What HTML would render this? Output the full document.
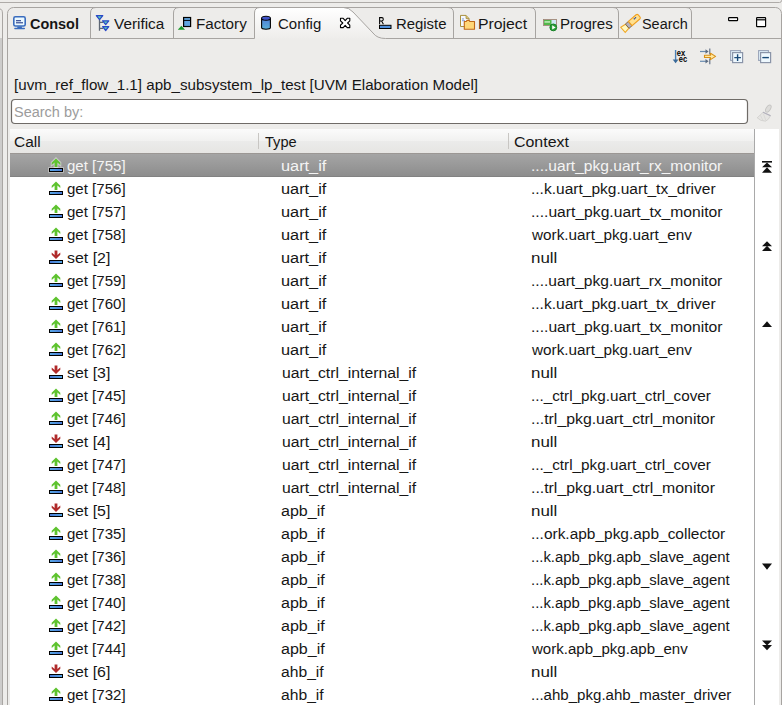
<!DOCTYPE html>
<html><head><meta charset="utf-8">
<style>
html,body{margin:0;padding:0;}
body{width:782px;height:705px;position:relative;overflow:hidden;background:#edecea;font-family:"Liberation Sans",sans-serif;}
.t{position:absolute;font-size:14px;line-height:16px;color:#161616;white-space:pre;transform-origin:0 0;}
.b{font-weight:bold;}
.sel{color:#f4f4f4;}
.ph{color:#9c9c9c;}
.ic{position:absolute;overflow:visible;}
.abs{position:absolute;}
</style></head><body>
<svg width="0" height="0" style="position:absolute">
 <defs>
  <linearGradient id="gbar" x1="0" x2="1" y1="0" y2="0"><stop offset="0" stop-color="#58a8e6"/><stop offset="1" stop-color="#4778d6"/></linearGradient>
  <linearGradient id="gbar2" x1="0" x2="1" y1="0" y2="0"><stop offset="0" stop-color="#4778d6"/><stop offset="1" stop-color="#58a8e6"/></linearGradient>
  <g id="up">
   <rect x="5.5" y="15.5" width="13" height="3" fill="url(#gbar)" stroke="#000" stroke-width="1"/>
   <path d="M12 5.4 L16.3 9.7 L16.3 12 L13.4 9.4 L13.4 13.9 L10.6 13.9 L10.6 9.4 L7.7 12 L7.7 9.7 Z" fill="#5ec32f"/>
  </g>
  <g id="uph">
   <path d="M12 5.4 L16.3 9.7 L16.3 12 L13.4 9.4 L13.4 13.9 L10.6 13.9 L10.6 9.4 L7.7 12 L7.7 9.7 Z" fill="none" stroke="#fff" stroke-opacity="0.45" stroke-width="2"/>
   <rect x="5.5" y="15.5" width="13" height="3" fill="none" stroke="#fff" stroke-opacity="0.45" stroke-width="2.6"/>
   <use href="#up"/>
  </g>
  <g id="dn">
   <rect x="5.5" y="15.5" width="13" height="3" fill="url(#gbar2)" stroke="#000" stroke-width="1"/>
   <path d="M12 14 L16.3 9.7 L16.3 7.4 L13.4 10 L13.4 5.6 L10.6 5.6 L10.6 10 L7.7 7.4 L7.7 9.7 Z" fill="#b02a2a"/>
  </g>
  <linearGradient id="gsel" x1="0" x2="0" y1="0" y2="1"><stop offset="0" stop-color="#a6a6a6"/><stop offset="1" stop-color="#8c8c8c"/></linearGradient>
  <linearGradient id="ghdr" x1="0" x2="0" y1="0" y2="1"><stop offset="0" stop-color="#fbfbfb"/><stop offset="0.5" stop-color="#f1f1f0"/><stop offset="0.52" stop-color="#ebebea"/><stop offset="1" stop-color="#e6e5e3"/></linearGradient>
  <linearGradient id="gtab" x1="0" x2="0" y1="0" y2="1"><stop offset="0" stop-color="#ffffff"/><stop offset="1" stop-color="#eeedeb"/></linearGradient>
 </defs>
</svg>

<!-- chrome -->
<svg class="abs" style="left:0;top:0" width="782" height="705">
 <rect x="0" y="38" width="2" height="667" fill="#cdcccb"/>
 <path d="M0 2.5 L779.5 2.5 Q781.5 2.5 781.5 0.5 L781.5 0" fill="none" stroke="#aeaba8"/>
 <path d="M0 9 Q2.5 9 2.5 14 L2.5 705" fill="none" stroke="#a9a6a3"/>
 <!-- selected tab fill -->
 <path d="M254.5 38.5 L254.5 13 Q254.5 7.5 260 7.5 L343.5 7.5 Q349 7.5 353 12 L373 33 Q377 38.5 385.5 38.5 Z" fill="url(#gtab)"/>
 <!-- frame -->
 <path d="M7.5 705 L7.5 13.5 A6 6 0 0 1 13.5 7.5 L775.5 7.5 A6 6 0 0 1 781.5 13.5 L781.5 705" fill="none" stroke="#a7a4a1"/>
 <path d="M7.5 38.5 L254.5 38.5 M385.5 38.5 L781.5 38.5" fill="none" stroke="#a7a4a1"/>
 <path d="M254.5 38.5 L254.5 13 Q254.5 7.5 260 7.5 L343.5 7.5 Q349 7.5 353 12 L373 33 Q377 38.5 385.5 38.5" fill="none" stroke="#a7a4a1"/>
 <!-- tab separators left of selected: rounded top-left -->
 <path d="M90.5 38.5 L90.5 13 Q90.5 7.5 96 7.5" fill="none" stroke="#a7a4a1"/>
 <path d="M173.5 38.5 L173.5 13 Q173.5 7.5 179 7.5" fill="none" stroke="#a7a4a1"/>
 <!-- right of selected: rounded top-right -->
 <path d="M453.5 38.5 L453.5 13 Q453.5 7.5 448 7.5" fill="none" stroke="#a7a4a1"/>
 <path d="M535.5 38.5 L535.5 13 Q535.5 7.5 530 7.5" fill="none" stroke="#a7a4a1"/>
 <path d="M618.5 38.5 L618.5 13 Q618.5 7.5 613 7.5" fill="none" stroke="#a7a4a1"/>
 <path d="M691.5 38.5 L691.5 13 Q691.5 7.5 686 7.5" fill="none" stroke="#a7a4a1"/>
 <!-- min / max -->
 <rect x="728.6" y="17.6" width="9" height="3" rx="0.6" fill="#fff" stroke="#000" stroke-width="1.15"/>
 <rect x="756.6" y="17.6" width="9" height="9" rx="0.6" fill="#fff" stroke="#000" stroke-width="1.15"/>
 <line x1="756.5" y1="19.8" x2="765.5" y2="19.8" stroke="#000" stroke-width="1.2"/>

 <!-- search box -->
 <rect x="11.5" y="99.5" width="736" height="24" rx="3.5" fill="#fff" stroke="#6f6b67" stroke-width="1.2"/>

 <!-- table -->
 <rect x="10" y="129" width="745" height="576" fill="#fff"/>
 <rect x="10" y="129" width="744" height="24" fill="url(#ghdr)"/>
 <line x1="258.5" y1="133" x2="258.5" y2="149" stroke="#c8c6c3"/>
 <line x1="508.5" y1="133" x2="508.5" y2="149" stroke="#c8c6c3"/>
 <rect x="10" y="153" width="744" height="24" fill="url(#gsel)"/>
 <line x1="10" y1="153.5" x2="754" y2="153.5" stroke="#9b9794"/>
 <line x1="10" y1="176.5" x2="754" y2="176.5" stroke="#828282"/>
 <line x1="754.5" y1="129" x2="754.5" y2="705" stroke="#a9a9a9"/>
 <rect x="755" y="129" width="24" height="576" fill="#fff"/>


 <!-- tab icons -->
 <g>
  <rect x="13.8" y="16.8" width="11.4" height="9.2" rx="1.6" fill="#eaf8ff" stroke="#3a6cbe" stroke-width="1.6"/>
  <rect x="16" y="20" width="5" height="1.3" fill="#44589c"/>
  <rect x="16" y="22.1" width="7" height="1.3" fill="#44589c"/>
  <rect x="17.3" y="26.4" width="4.6" height="1.6" fill="#3a6cbe"/>
  <rect x="14.2" y="27.8" width="10.8" height="1.4" rx="0.7" fill="#3a6cbe"/>
 </g>
 <g>
  <path d="M99.5 19.5 V30.7 M99.5 22.4 H103 M99.5 28.3 H103" stroke="#5f6774" stroke-width="1.3" fill="none"/>
  <path d="M96.3 15.7 H102.8 L99.55 19.6 Z" fill="#5ccab8" stroke="#2a48c8" stroke-width="1.2" stroke-linejoin="round"/>
  <path d="M102.6 20.8 H108.8 L105.7 24.6 Z" fill="#5ccab8" stroke="#2a48c8" stroke-width="1.2" stroke-linejoin="round"/>
  <path d="M102.6 26.7 H108.8 L105.7 30.5 Z" fill="#5ccab8" stroke="#2a48c8" stroke-width="1.2" stroke-linejoin="round"/>
 </g>
 <g>
  <rect x="183.6" y="17.5" width="7" height="9" fill="#62a6e0" stroke="#000" stroke-width="1.2"/>
  <line x1="183.6" y1="20.4" x2="190.6" y2="20.4" stroke="#000" stroke-width="1"/>
  <path d="M181.4 25.8 L185 29.8 L177.8 29.8 Z" fill="#1a9a2a"/>
 </g>
 <g>
  <linearGradient id="gcyl" x1="0" x2="0" y1="0" y2="1"><stop offset="0" stop-color="#4f7fd8"/><stop offset="1" stop-color="#5ab0d8"/></linearGradient>
  <path d="M261.6 18.3 V27.6 C261.6 28.7 263.6 29.3 266 29.3 C268.4 29.3 270.4 28.7 270.4 27.6 V18.3" fill="url(#gcyl)" stroke="#000" stroke-width="1.1"/>
  <ellipse cx="266" cy="18.3" rx="4.4" ry="2" fill="#4054c8" stroke="#000" stroke-width="1.05"/>
 </g>
 <path d="M340.5 18.3 H343.2 L345.2 20.6 L347.2 18.3 H349.8 V20.8 L347.6 23 L349.8 25.2 V27.6 H347.2 L345.2 25.4 L343.2 27.6 H340.5 V25.2 L342.8 23 L340.5 20.8 Z" fill="#fff" stroke="#000" stroke-width="1.1" stroke-linejoin="round"/>
 <g>
  <path d="M379.6 24.2 V17.6 H381.9 Q383.3 17.6 383.3 19.3 Q383.3 20.9 381.9 20.9 H379.6 M381.6 20.9 L383.4 24.2" fill="none" stroke="#000" stroke-width="1.05"/>
  <rect x="379.5" y="25.3" width="11.5" height="3.2" fill="#4f90dc" stroke="#000" stroke-width="1"/>
 </g>
 <g>
  <path d="M460.5 15.4 H466 L469 18.5 V26.5 H460.5 Z" fill="#f4f8ff" stroke="#a8903e" stroke-width="1"/>
  <path d="M466 15.4 V18.5 H469" fill="#d8c070" stroke="#a8903e" stroke-width="0.8"/>
  <rect x="462" y="18.5" width="2" height="0.9" fill="#7890c8"/>
  <rect x="462" y="20.3" width="3" height="0.9" fill="#7890c8"/>
  <path d="M464.3 29.3 V21.5 H466.3 L467 20.4 H469.2 L469.8 21.5 H474.5 V29.3 Z" fill="#ffd778" stroke="#c06818" stroke-width="1.1" stroke-linejoin="round"/>
 </g>
 <g>
  <rect x="543.5" y="19.5" width="13" height="6" fill="#cfe8f5" stroke="#a08878" stroke-width="0.9"/>
  <rect x="544" y="20" width="7.5" height="5" fill="#52b84a"/>
  <rect x="544.5" y="21.3" width="5.5" height="1.3" fill="#d8f4d0"/>
  <circle cx="553.3" cy="27.4" r="3.4" fill="#2aa03a" stroke="#158025" stroke-width="1"/>
  <path d="M552.2 25.3 L555.6 27.4 L552.2 29.5 Z" fill="#fff"/>
 </g>
 <g>
  <g transform="translate(631 22.9) rotate(-41)">
   <path d="M-10.6 -3.4 L-5 -2.6 L-5 2.6 L-10.6 3.4 Z" fill="#fff8c0" stroke="#f0a828" stroke-width="1"/>
   <path d="M-5 -2.8 L-1 -2.8 L-1 2.8 L-5 2.8 Z" fill="#b4b0bc" stroke="#806848" stroke-width="0.9"/>
   <path d="M-1 -2.8 L9.2 -2.8 Q10.7 -2.8 10.7 -1.3 L10.7 1.3 Q10.7 2.8 9.2 2.8 L-1 2.8 Z" fill="#ffe090" stroke="#f0a020" stroke-width="1.1"/>
   <circle cx="5.2" cy="-0.9" r="0.75" fill="#2f4f9f"/><circle cx="6.8" cy="-0.9" r="0.75" fill="#2f4f9f"/>
  </g>

 <!-- toolbar icons -->
 <g>
  <line x1="675.6" y1="50" x2="675.6" y2="61" stroke="#4a80b8" stroke-width="1.4"/>
  <path d="M672.7 59.5 H678.5 L675.6 63.2 Z" fill="#3a6a9a"/>
  <text x="676.8" y="55.9" font-family="Liberation Sans" font-weight="bold" font-size="9" textLength="8.4" lengthAdjust="spacingAndGlyphs" fill="#000">ex</text>
  <text x="678.8" y="61.8" font-family="Liberation Sans" font-weight="bold" font-size="9" textLength="8.4" lengthAdjust="spacingAndGlyphs" fill="#000">ec</text>
 </g>
 <g>
  <path d="M700 51.5 H707" stroke="#6a8cb0" stroke-width="1.2"/>
  <path d="M705.5 49.2 L708.6 51.5 L705.5 53.8 Z" fill="#5a6a80"/>
  <line x1="709.8" y1="48.6" x2="709.8" y2="54.6" stroke="#5a6a80" stroke-width="1.1"/>
  <path d="M700 61.3 H707" stroke="#6a8cb0" stroke-width="1.2"/>
  <path d="M705.5 59 L708.6 61.3 L705.5 63.6 Z" fill="#5a6a80"/>
  <line x1="709.8" y1="58.4" x2="709.8" y2="64.2" stroke="#5a6a80" stroke-width="1.1"/>
  <path d="M704.5 55.3 H710.5 V53.2 L715.6 56.4 L710.5 59.6 V57.5 H704.5 Z" fill="#ffe8a0" stroke="#d89018" stroke-width="1.1" stroke-linejoin="round"/>
 </g>
 <g>
  <rect x="730.6" y="50.6" width="9.8" height="9.8" fill="#e2f2fb" stroke="#9aa4b8" stroke-width="1.1"/>
  <rect x="732.6" y="52.6" width="10" height="10" fill="#eef8fe" stroke="#8a94a8" stroke-width="1.2"/>
  <path d="M737.6 54.3 V60.9 M734.3 57.6 H740.9" stroke="#1a4a78" stroke-width="1.4"/>
 </g>
 <g>
  <rect x="758.6" y="50.6" width="9.8" height="9.8" fill="#e2f2fb" stroke="#9aa4b8" stroke-width="1.1"/>
  <rect x="760.6" y="52.6" width="10" height="10" fill="#eef8fe" stroke="#8a94a8" stroke-width="1.2"/>
  <path d="M762.3 57.6 H768.9" stroke="#1a4a78" stroke-width="1.4"/>
 </g>
 <!-- broom -->
 <g>
  <ellipse cx="768.3" cy="108.6" rx="2.1" ry="4" transform="rotate(32 768.3 108.6)" fill="#dddcda" stroke="#c4c3c1" stroke-width="0.9"/>
  <path d="M763.2 112.2 L770.4 115.6 Q769 119.8 765.5 121.2 Q760.5 121.2 757.2 117.8 Z" fill="#e6e5e3" stroke="#cfcecc" stroke-width="0.8"/>
  <path d="M760.5 115.5 L763 120.5 M763.5 114 L766 120.8" stroke="#d2d1cf" stroke-width="0.6"/>
  <line x1="763" y1="112.3" x2="770.6" y2="115.7" stroke="#b2b0bc" stroke-width="1.1"/>
 </g>
 <!-- nav arrows -->
 <g fill="#111">
  <rect x="762" y="161" width="10" height="1.6"/>
  <path d="M767 162.5 L772 167.3 L762 167.3 Z"/>
  <path d="M767 167.3 L772 172.8 L762 172.8 Z"/>
  <path d="M767 241.2 L772 246.3 L762 246.3 Z"/>
  <path d="M767 245.8 L772 251 L762 251 Z"/>
  <path d="M767 321.2 L772 327 L762 327 Z"/>
  <path d="M762 563.5 L772 563.5 L767 569.8 Z"/>
  <path d="M762 640.5 L772 640.5 L767 645.5 Z"/>
  <path d="M762 645 L772 645 L767 650.3 Z"/>
 </g>
</svg>

<!-- tab labels -->
<div class="t b" style="left:30.47px;top:16px;transform:scaleX(1.0304);">Consol</div>
<div class="t" style="left:113.70px;top:16px;transform:scaleX(1.0957);">Verifica</div>
<div class="t" style="left:196.11px;top:16px;transform:scaleX(1.0870);">Factory</div>
<div class="t" style="left:277.63px;top:16px;transform:scaleX(1.0692);">Config</div>
<div class="t" style="left:396.34px;top:16px;transform:scaleX(1.0630);">Registe</div>
<div class="t" style="left:478.17px;top:16px;transform:scaleX(1.1279);">Project</div>
<div class="t" style="left:560.22px;top:16px;transform:scaleX(1.0771);">Progres</div>
<div class="t" style="left:642.37px;top:16px;transform:scaleX(1.0302);">Search</div>

<div class="t" style="left:14.22px;top:77px;transform:scaleX(1.0822);">[uvm_ref_flow_1.1] apb_subsystem_lp_test [UVM Elaboration Model]</div>
<div class="t ph" style="left:14.07px;top:104px;transform:scaleX(1.0338);">Search by:</div>
<div class="t" style="left:14.30px;top:134px;transform:scaleX(1.1045);">Call</div>
<div class="t" style="left:265.10px;top:134px;transform:scaleX(1.0433);">Type</div>
<div class="t" style="left:514.46px;top:134px;transform:scaleX(1.1383);">Context</div>

<svg class="ic" style="left:44px;top:153px" width="24" height="23"><use href="#uph"/></svg>
<div class="t sel" style="left:67.42px;top:158px;transform:scaleX(1.0755);">get [755]</div>
<div class="t sel" style="left:281.33px;top:158px;transform:scaleX(1.1658);">uart_if</div>
<div class="t sel" style="left:530.69px;top:158px;transform:scaleX(1.1123);">....uart_pkg.uart_rx_monitor</div>
<svg class="ic" style="left:44px;top:176px" width="24" height="23"><use href="#up"/></svg>
<div class="t" style="left:67.42px;top:181px;transform:scaleX(1.0755);">get [756]</div>
<div class="t" style="left:281.33px;top:181px;transform:scaleX(1.1658);">uart_if</div>
<div class="t" style="left:530.69px;top:181px;transform:scaleX(1.1085);">...k.uart_pkg.uart_tx_driver</div>
<svg class="ic" style="left:44px;top:199px" width="24" height="23"><use href="#up"/></svg>
<div class="t" style="left:67.42px;top:204px;transform:scaleX(1.0755);">get [757]</div>
<div class="t" style="left:281.33px;top:204px;transform:scaleX(1.1658);">uart_if</div>
<div class="t" style="left:530.68px;top:204px;transform:scaleX(1.1188);">....uart_pkg.uart_tx_monitor</div>
<svg class="ic" style="left:44px;top:222px" width="24" height="23"><use href="#up"/></svg>
<div class="t" style="left:67.42px;top:227px;transform:scaleX(1.0755);">get [758]</div>
<div class="t" style="left:281.33px;top:227px;transform:scaleX(1.1658);">uart_if</div>
<div class="t" style="left:532.30px;top:227px;transform:scaleX(1.0932);">work.uart_pkg.uart_env</div>
<svg class="ic" style="left:44px;top:245px" width="24" height="23"><use href="#dn"/></svg>
<div class="t" style="left:66.96px;top:250px;transform:scaleX(1.1361);">set [2]</div>
<div class="t" style="left:281.33px;top:250px;transform:scaleX(1.1658);">uart_if</div>
<div class="t" style="left:530.59px;top:250px;transform:scaleX(1.2100);">null</div>
<svg class="ic" style="left:44px;top:268px" width="24" height="23"><use href="#up"/></svg>
<div class="t" style="left:67.42px;top:273px;transform:scaleX(1.0755);">get [759]</div>
<div class="t" style="left:281.33px;top:273px;transform:scaleX(1.1658);">uart_if</div>
<div class="t" style="left:530.69px;top:273px;transform:scaleX(1.1123);">....uart_pkg.uart_rx_monitor</div>
<svg class="ic" style="left:44px;top:291px" width="24" height="23"><use href="#up"/></svg>
<div class="t" style="left:67.42px;top:296px;transform:scaleX(1.0755);">get [760]</div>
<div class="t" style="left:281.33px;top:296px;transform:scaleX(1.1658);">uart_if</div>
<div class="t" style="left:530.69px;top:296px;transform:scaleX(1.1085);">...k.uart_pkg.uart_tx_driver</div>
<svg class="ic" style="left:44px;top:314px" width="24" height="23"><use href="#up"/></svg>
<div class="t" style="left:67.42px;top:319px;transform:scaleX(1.0755);">get [761]</div>
<div class="t" style="left:281.33px;top:319px;transform:scaleX(1.1658);">uart_if</div>
<div class="t" style="left:530.68px;top:319px;transform:scaleX(1.1188);">....uart_pkg.uart_tx_monitor</div>
<svg class="ic" style="left:44px;top:337px" width="24" height="23"><use href="#up"/></svg>
<div class="t" style="left:67.42px;top:342px;transform:scaleX(1.0755);">get [762]</div>
<div class="t" style="left:281.33px;top:342px;transform:scaleX(1.1658);">uart_if</div>
<div class="t" style="left:532.30px;top:342px;transform:scaleX(1.0932);">work.uart_pkg.uart_env</div>
<svg class="ic" style="left:44px;top:360px" width="24" height="23"><use href="#dn"/></svg>
<div class="t" style="left:66.96px;top:365px;transform:scaleX(1.1361);">set [3]</div>
<div class="t" style="left:281.57px;top:365px;transform:scaleX(1.1263);">uart_ctrl_internal_if</div>
<div class="t" style="left:530.59px;top:365px;transform:scaleX(1.2100);">null</div>
<svg class="ic" style="left:44px;top:383px" width="24" height="23"><use href="#up"/></svg>
<div class="t" style="left:67.42px;top:388px;transform:scaleX(1.0755);">get [745]</div>
<div class="t" style="left:281.57px;top:388px;transform:scaleX(1.1263);">uart_ctrl_internal_if</div>
<div class="t" style="left:531.11px;top:388px;transform:scaleX(1.0909);">..._ctrl_pkg.uart_ctrl_cover</div>
<svg class="ic" style="left:44px;top:406px" width="24" height="23"><use href="#up"/></svg>
<div class="t" style="left:67.42px;top:411px;transform:scaleX(1.0755);">get [746]</div>
<div class="t" style="left:281.57px;top:411px;transform:scaleX(1.1263);">uart_ctrl_internal_if</div>
<div class="t" style="left:531.07px;top:411px;transform:scaleX(1.1309);">...trl_pkg.uart_ctrl_monitor</div>
<svg class="ic" style="left:44px;top:429px" width="24" height="23"><use href="#dn"/></svg>
<div class="t" style="left:66.96px;top:434px;transform:scaleX(1.1361);">set [4]</div>
<div class="t" style="left:281.57px;top:434px;transform:scaleX(1.1263);">uart_ctrl_internal_if</div>
<div class="t" style="left:530.59px;top:434px;transform:scaleX(1.2100);">null</div>
<svg class="ic" style="left:44px;top:452px" width="24" height="23"><use href="#up"/></svg>
<div class="t" style="left:67.42px;top:457px;transform:scaleX(1.0755);">get [747]</div>
<div class="t" style="left:281.57px;top:457px;transform:scaleX(1.1263);">uart_ctrl_internal_if</div>
<div class="t" style="left:531.11px;top:457px;transform:scaleX(1.0909);">..._ctrl_pkg.uart_ctrl_cover</div>
<svg class="ic" style="left:44px;top:475px" width="24" height="23"><use href="#up"/></svg>
<div class="t" style="left:67.42px;top:480px;transform:scaleX(1.0755);">get [748]</div>
<div class="t" style="left:281.57px;top:480px;transform:scaleX(1.1263);">uart_ctrl_internal_if</div>
<div class="t" style="left:531.07px;top:480px;transform:scaleX(1.1309);">...trl_pkg.uart_ctrl_monitor</div>
<svg class="ic" style="left:44px;top:498px" width="24" height="23"><use href="#dn"/></svg>
<div class="t" style="left:66.96px;top:503px;transform:scaleX(1.1361);">set [5]</div>
<div class="t" style="left:281.15px;top:503px;transform:scaleX(1.1459);">apb_if</div>
<div class="t" style="left:530.59px;top:503px;transform:scaleX(1.2100);">null</div>
<svg class="ic" style="left:44px;top:521px" width="24" height="23"><use href="#up"/></svg>
<div class="t" style="left:67.42px;top:526px;transform:scaleX(1.0755);">get [735]</div>
<div class="t" style="left:281.15px;top:526px;transform:scaleX(1.1459);">apb_if</div>
<div class="t" style="left:531.10px;top:526px;transform:scaleX(1.1040);">...ork.apb_pkg.apb_collector</div>
<svg class="ic" style="left:44px;top:544px" width="24" height="23"><use href="#up"/></svg>
<div class="t" style="left:67.42px;top:549px;transform:scaleX(1.0755);">get [736]</div>
<div class="t" style="left:281.15px;top:549px;transform:scaleX(1.1459);">apb_if</div>
<div class="t" style="left:530.74px;top:549px;transform:scaleX(1.0634);">...k.apb_pkg.apb_slave_agent</div>
<svg class="ic" style="left:44px;top:567px" width="24" height="23"><use href="#up"/></svg>
<div class="t" style="left:67.42px;top:572px;transform:scaleX(1.0755);">get [738]</div>
<div class="t" style="left:281.15px;top:572px;transform:scaleX(1.1459);">apb_if</div>
<div class="t" style="left:530.74px;top:572px;transform:scaleX(1.0634);">...k.apb_pkg.apb_slave_agent</div>
<svg class="ic" style="left:44px;top:590px" width="24" height="23"><use href="#up"/></svg>
<div class="t" style="left:67.42px;top:595px;transform:scaleX(1.0755);">get [740]</div>
<div class="t" style="left:281.15px;top:595px;transform:scaleX(1.1459);">apb_if</div>
<div class="t" style="left:530.74px;top:595px;transform:scaleX(1.0634);">...k.apb_pkg.apb_slave_agent</div>
<svg class="ic" style="left:44px;top:613px" width="24" height="23"><use href="#up"/></svg>
<div class="t" style="left:67.42px;top:618px;transform:scaleX(1.0755);">get [742]</div>
<div class="t" style="left:281.15px;top:618px;transform:scaleX(1.1459);">apb_if</div>
<div class="t" style="left:530.74px;top:618px;transform:scaleX(1.0634);">...k.apb_pkg.apb_slave_agent</div>
<svg class="ic" style="left:44px;top:636px" width="24" height="23"><use href="#up"/></svg>
<div class="t" style="left:67.42px;top:641px;transform:scaleX(1.0755);">get [744]</div>
<div class="t" style="left:281.15px;top:641px;transform:scaleX(1.1459);">apb_if</div>
<div class="t" style="left:532.00px;top:641px;transform:scaleX(1.0752);">work.apb_pkg.apb_env</div>
<svg class="ic" style="left:44px;top:659px" width="24" height="23"><use href="#dn"/></svg>
<div class="t" style="left:66.96px;top:664px;transform:scaleX(1.1361);">set [6]</div>
<div class="t" style="left:281.18px;top:664px;transform:scaleX(1.1189);">ahb_if</div>
<div class="t" style="left:530.59px;top:664px;transform:scaleX(1.2100);">null</div>
<svg class="ic" style="left:44px;top:682px" width="24" height="23"><use href="#up"/></svg>
<div class="t" style="left:67.42px;top:687px;transform:scaleX(1.0755);">get [732]</div>
<div class="t" style="left:281.18px;top:687px;transform:scaleX(1.1189);">ahb_if</div>
<div class="t" style="left:530.72px;top:687px;transform:scaleX(1.0768);">...ahb_pkg.ahb_master_driver</div>
</body></html>
